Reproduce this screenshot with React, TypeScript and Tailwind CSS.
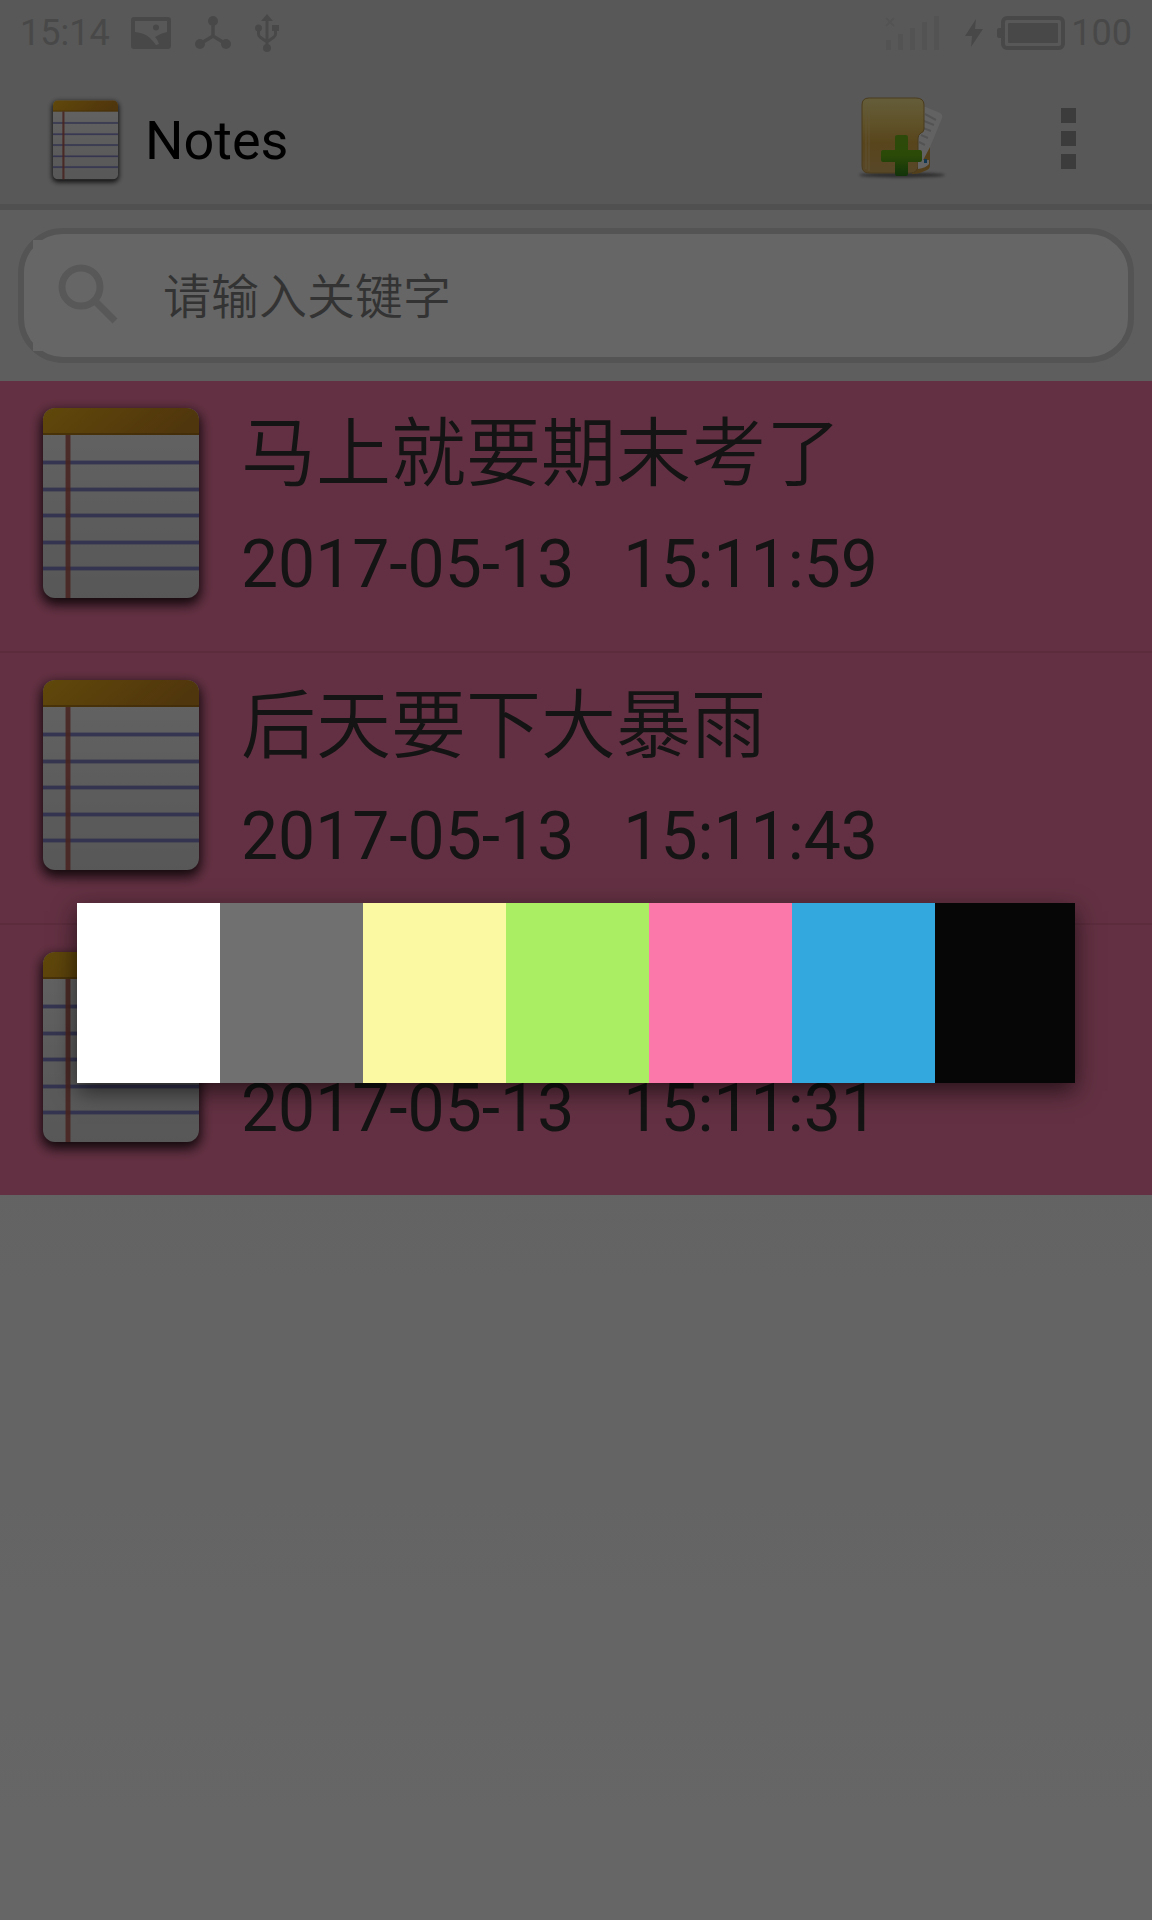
import React from "react";

const notes = [
  { title: "马上就要期末考了", time: "2017-05-13   15:11:59" },
  { title: "后天要下大暴雨", time: "2017-05-13   15:11:43" },
  { title: "\u00a0", time: "2017-05-13   15:11:31" },
];

const swatches = [
  { name: "白色", cls: "bg-white" },
  { name: "灰色", cls: "bg-[#707070]" },
  { name: "黄色", cls: "bg-[#fbf9a2]" },
  { name: "绿色", cls: "bg-[#aaee63]" },
  { name: "粉色", cls: "bg-[#fb79aa]" },
  { name: "蓝色", cls: "bg-[#32a8df]" },
  { name: "黑色", cls: "bg-[#060606]" },
];

function NotepadIcon({ id, className }: { id: string; className: string }) {
  return (
    <svg viewBox="0 0 192 228" className={className} aria-hidden="true">
      <defs>
        <linearGradient id={id + "top"} x1="0" x2="1" y1="0" y2="0.2">
          <stop offset="0" stopColor="#f0b41c" />
          <stop offset="1" stopColor="#c8871e" />
        </linearGradient>
        <linearGradient id={id + "paper"} x1="0" x2="0" y1="0" y2="1">
          <stop offset="0" stopColor="#f8f8f8" />
          <stop offset="1" stopColor="#dadada" />
        </linearGradient>
        <clipPath id={id + "clip"}>
          <rect x="18" y="15" width="156" height="190" rx="12" />
        </clipPath>
        <filter id={id + "blur"} x="-20%" y="-20%" width="140%" height="140%">
          <feGaussianBlur stdDeviation="6" />
        </filter>
      </defs>
      <rect x="16" y="18" width="160" height="194" rx="14" fill="#000" opacity="0.8" filter={`url(#${id}blur)`} />
      <g clipPath={`url(#${id}clip)`}>
        <rect x="18" y="15" width="156" height="190" fill={`url(#${id}paper)`} />
        <rect x="18" y="15" width="156" height="27" fill={`url(#${id}top)`} />
        <rect x="18" y="40" width="156" height="2" fill="#9c6c18" opacity="0.7" />
        {[69, 96, 122, 149, 175].map((y) => (
          <g key={y} fill="#7474c4">
            <rect x="18" y={y - 2} width="156" height="5" opacity="0.35" />
            <rect x="18" y={y - 1} width="156" height="3" opacity="0.8" />
          </g>
        ))}
        <rect x="40" y="42" width="6" height="163" fill="#b4594f" opacity="0.4" />
        <rect x="41" y="42" width="4" height="163" fill="#b4594f" opacity="0.8" />
      </g>
    </svg>
  );
}

function AddNoteIcon() {
  return (
    <svg viewBox="0 0 96 96" className="size-24" aria-hidden="true">
      <defs>
        <linearGradient id="folder" x1="0" x2="0" y1="0" y2="1">
          <stop offset="0" stopColor="#fbe992" />
          <stop offset="0.35" stopColor="#eecb64" />
          <stop offset="0.6" stopColor="#dcac48" />
          <stop offset="1" stopColor="#dcb264" />
        </linearGradient>
        <linearGradient id="plus" x1="0" x2="0" y1="0" y2="1">
          <stop offset="0" stopColor="#74b81c" />
          <stop offset="0.5" stopColor="#6cb814" />
          <stop offset="1" stopColor="#2c8018" />
        </linearGradient>
        <filter id="soft" x="-20%" y="-100%" width="140%" height="300%">
          <feGaussianBlur stdDeviation="1.5" />
        </filter>
      </defs>
      <ellipse cx="48" cy="85" rx="43" ry="2.5" fill="#333" opacity="0.65" filter="url(#soft)" />
      <path d="M60 60L76 56V75Q76 79 73 80L66 83Q63 84 58 84Z" fill="#d0a044" />
      <path d="M69 16L86 23Q89 25 88 28L76 57L66 76L60 79Z" fill="#f6f6f6" />
      <path d="M71 24L82 30M70 31L80 35M69 38L77 41M67 45L74 48M65 52L71 55" stroke="#cfcfcf" strokeWidth="2" />
      <path d="M15 8H62Q70 8 70 15V39Q70 42 67 43Q64 45 64 48V75Q64 83 56 83H15Q8 83 8 76V15Q8 8 15 8Z" fill="url(#folder)" stroke="#b8944a" strokeWidth="1" />
      <path d="M12 13V79M15 14V81" stroke="#f4dc98" strokeWidth="1.5" opacity="0.4" />
      <path d="M64 79V70H75V74Q72 78 64 79Z" fill="#fbfbfb" />
      <rect x="70" y="69" width="3" height="4" fill="#2b8cc8" />
      <path d="M43 45H52Q54 45 54 47V60H66Q68 60 68 62V70Q68 72 66 72H54V84Q54 86 52 86H43Q41 86 41 84V72H29Q27 72 27 70V62Q27 60 29 60H41V47Q41 45 43 45Z" fill="url(#plus)" />
    </svg>
  );
}

function StatusBar() {
  return (
    <div className="flex h-[66px] items-center justify-between px-5 text-[36px] text-[#b4b4b4]">
      <div className="flex items-center">
        <span>15:14</span>
        <svg viewBox="0 0 40 32" className="ml-[21px] h-8 w-10" aria-hidden="true">
          <path fillRule="evenodd" fill="currentColor" d="M3 0H37Q40 0 40 3V29Q40 32 37 32H3Q0 32 0 29V3Q0 0 3 0ZM4 4V15Q14 16 19 21Q23 25 25 28L28 27Q27 23 24 20Q30 16 36 15V4ZM25 7.500A3 3 0 1 1 25 13.500A3 3 0 1 1 25 7.500Z" />
        </svg>
        <svg viewBox="0 0 36 34" className="ml-6 h-[34px] w-9" fill="currentColor" aria-hidden="true">
          <path d="M18 5V20L5 28M18 20L31 28" fill="none" stroke="currentColor" strokeWidth="3.500" />
          <circle cx="18" cy="5" r="5" />
          <circle cx="5" cy="28" r="5" />
          <circle cx="31" cy="28" r="5" />
        </svg>
        <svg viewBox="0 0 24 38" className="ml-6 h-[38px] w-6" fill="currentColor" aria-hidden="true">
          <path d="M12 4V34M3.500 14V20Q3.500 22 5 23L12 28M20.500 14V20Q20.500 22 19 23L12 28" fill="none" stroke="currentColor" strokeWidth="3" />
          <path d="M12 0L18 7H6Z" />
          <circle cx="3.500" cy="14" r="3.500" />
          <rect x="17" y="11" width="7" height="6" />
          <circle cx="12" cy="34" r="4" />
        </svg>
      </div>
      <div className="flex items-center">
        <svg viewBox="0 0 54 34" className="h-[34px] w-[54px] text-[#cfcfcf]" fill="currentColor" aria-hidden="true">
          <path d="M1 2L9 10M9 2L1 10" stroke="currentColor" strokeWidth="2" />
          <rect x="1" y="24" width="5" height="10" />
          <rect x="13" y="18" width="5" height="16" />
          <rect x="25" y="12" width="5" height="22" />
          <rect x="37" y="6" width="5" height="28" />
          <rect x="49" y="0" width="5" height="34" />
        </svg>
        <svg viewBox="0 0 18 28" className="ml-[26px] h-7 w-[18px]" fill="currentColor" aria-hidden="true">
          <path d="M11 0L0 17H7L6 28L18 10H10Z" />
        </svg>
        <svg viewBox="0 0 68 34" className="ml-3.5 h-[34px] w-[68px]" fill="currentColor" aria-hidden="true">
          <rect x="6" y="2" width="60" height="30" rx="4" fill="none" stroke="currentColor" strokeWidth="4" />
          <rect x="11" y="7" width="50" height="20" rx="1" />
          <path d="M5 12H2Q0 12 0 14V20Q0 22 2 22H5Z" />
        </svg>
        <span className="ml-1.5">100</span>
      </div>
    </div>
  );
}

export default function App() {
  return (
    <div className="relative flex min-h-screen flex-col bg-gradient-to-b from-[#ededed] to-[#ffffff] font-['Roboto','Noto_Sans_CJK_SC',sans-serif]">
      <header className="border-b-6 border-[#c9c9c9] bg-[#dcdcdc]">
        <StatusBar />
        <div className="flex h-[138px] items-center pt-1.5 pr-[61px] pl-[42px]">
          <div className="flex flex-1 items-center pt-1.5">
            <NotepadIcon id="app" className="h-[95px] w-[87px]" />
            <h1 className="ml-4 text-[54px] leading-none text-black">Notes</h1>
          </div>
          <button type="button" aria-label="新建便签">
            <AddNoteIcon />
          </button>
          <button type="button" aria-label="更多" className="ml-24 flex w-[45px] flex-col items-center gap-2">
            <span className="size-[15px] bg-[#969696]" />
            <span className="size-[15px] bg-[#969696]" />
            <span className="size-[15px] bg-[#969696]" />
          </button>
        </div>
      </header>

      <div className="bg-[#ececec] px-[18px] py-[18px]">
        <label className="flex h-[135px] items-center rounded-[45px] border-6 border-[#d2d2d2] bg-white pl-[9px]">
          <span className="flex h-[111px] items-start bg-white pt-6 pr-[45px] pl-[25px]">
            <svg viewBox="0 0 60 60" className="size-[60px] text-[#d9dcd9]" aria-hidden="true">
              <circle cx="23" cy="23" r="19" fill="none" stroke="currentColor" strokeWidth="7" />
              <path d="M38 38L57 57" stroke="currentColor" strokeWidth="7" />
            </svg>
          </span>
          <input
            type="text"
            aria-label="搜索"
            placeholder="请输入关键字"
            className="min-w-0 flex-1 bg-transparent pt-1 text-[48px] font-[350] text-black outline-none placeholder:text-[#808080]"
          />
        </label>
      </div>

      <ul className="divide-y-2 divide-[#e66e98] bg-[#f679a6]">
        {notes.map((n, i) => (
          <li key={n.time} className="box-content flex h-[270px] gap-6 pl-[25px]">
            <NotepadIcon id={"n" + i} className="mt-3 h-[228px] w-48" />
            <div className="pt-[18px]">
              <h2 className="text-[75px] leading-[110px] font-[350] text-[#353233]">{n.title}</h2>
              <p className="text-[66px] leading-[112px] whitespace-pre text-[#353233]">{n.time}</p>
            </div>
          </li>
        ))}
      </ul>

      <div className="absolute inset-0 flex items-center justify-center bg-black/60 px-[77px] pt-[66px]">
        <div role="dialog" aria-label="选择背景颜色" className="flex h-[180px] w-full overflow-hidden shadow-[0_8px_22px_rgba(0,0,0,0.6)]">
          {swatches.map((s) => (
            <button key={s.name} type="button" aria-label={s.name} className={"h-full basis-[143px] grow last:basis-[140px] " + s.cls} />
          ))}
        </div>
      </div>
    </div>
  );
}
